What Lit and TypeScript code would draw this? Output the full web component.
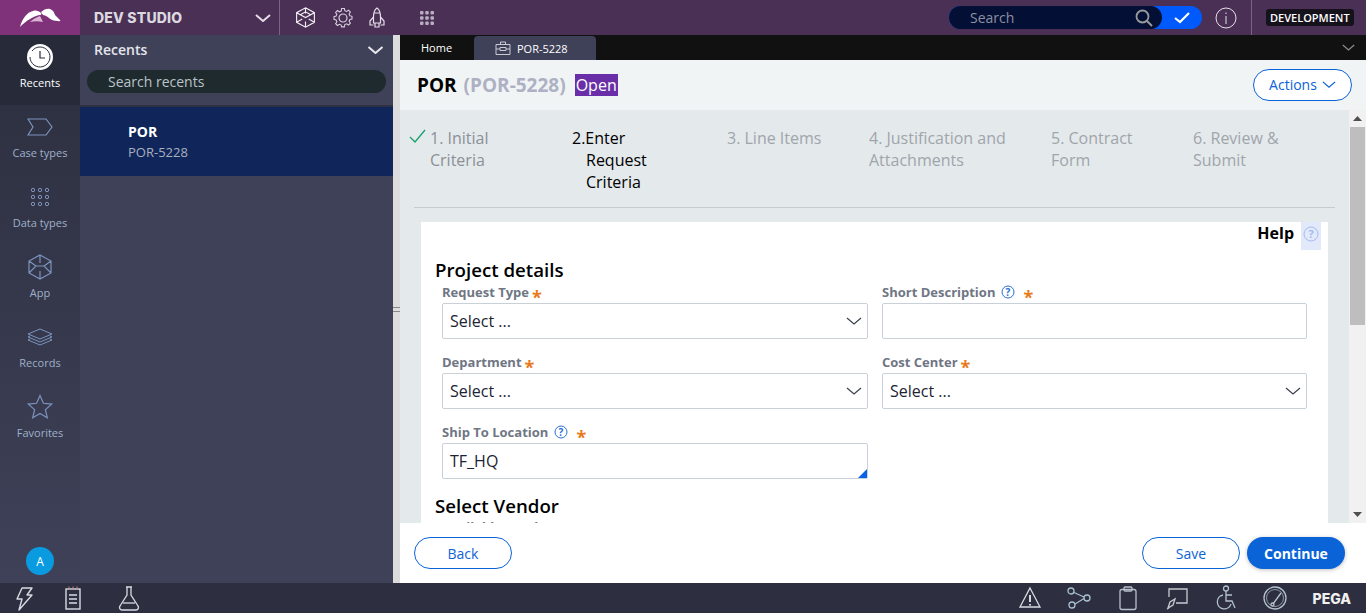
import {LitElement, css, html, svg} from 'lit';
import {customElement} from 'lit/decorators.js';

const railItems = [
    {
        label: 'Recents',
        active: true,
        icon: svg`<circle cx="13" cy="13" r="13" fill="#fff"/><path d="M5 7a10 10 0 1 1-2 6" fill="none" stroke="#2a2e3d"/><path d="M13 7v7h5" fill="none" stroke="#2a2e3d" stroke-width="1.200"/>`,
    },
    {
        label: 'Case types',
        icon: svg`<path d="M1 5h18l6 8-6 8H1l5-8z" fill="none" stroke="#7d93bd" stroke-width="1.2"/>`,
    },
    {
        label: 'Data types',
        icon: svg`<g fill="none" stroke="#7d93bd" stroke-width="1"><circle cx="6" cy="6" r="1.7"/><circle cx="13" cy="6" r="1.7"/><circle cx="20" cy="6" r="1.7"/><circle cx="6" cy="13" r="1.7"/><circle cx="13" cy="13" r="1.7"/><circle cx="20" cy="13" r="1.7"/><circle cx="6" cy="20" r="1.7"/><circle cx="13" cy="20" r="1.7"/><circle cx="20" cy="20" r="1.7"/></g>`,
    },
    {
        label: 'App',
        icon: svg`<path d="M13 1l11 6v12l-11 6-11-6V7zM13 1v8M2 7l7 5M24 7l-7 5M9 12l-7 7M17 12l7 7M13 25v-8M9 12h8" fill="none" stroke="#7d93bd" stroke-width="1.2"/>`,
    },
    {
        label: 'Records',
        icon: svg`<g fill="none" stroke="#7d93bd" stroke-width="1"><path d="M13 5l12 5-12 5-12-5z"/><path d="M3 12l-2 1 12 5 12-5-2-1"/><path d="M3 15l-2 1 12 5 12-5-2-1"/></g>`,
    },
    {
        label: 'Favorites',
        icon: svg`<path d="M13 1.500l3.400 7.800 8.300.8-6.300 5.500 1.900 8.200L13 19.500l-7.300 4.300 1.900-8.200L1.300 10.100l8.300-.8z" fill="none" stroke="#7d93bd" stroke-width="1.2"/>`,
    },
];

const steps = [
    {text: '1. Initial Criteria', state: 'done'},
    {text: '2.Enter Request Criteria', state: 'current'},
    {text: '3. Line Items', state: ''},
    {text: '4. Justification and Attachments', state: ''},
    {text: '5. Contract Form', state: ''},
    {text: '6. Review & Submit', state: ''},
];

const fields = [
    {label: 'Request Type', type: 'select', value: 'Select ...'},
    {label: 'Short Description', type: 'text', value: '', help: true},
    {label: 'Department', type: 'select', value: 'Select ...'},
    {label: 'Cost Center', type: 'select', value: 'Select ...'},
    {label: 'Ship To Location', type: 'lookup', value: 'TF_HQ', help: true},
];

const bottomLeft = [
    svg`<path d="M10 3h10l-5 7h5L7 25l3-11H5z" fill="none" stroke="#d8dae2" stroke-width="1.4" stroke-linejoin="round"/>`,
    svg`<g fill="none" stroke="#d8dae2"><rect x="6" y="4" width="14" height="20" stroke-width="1.4"/><path d="M9 1.500v3M13 1.500v3M17 1.500v3" stroke="#c78a8a"/><path d="M9 10h8M9 14h8M9 18h8" stroke-width="1.400"/></g>`,
    svg`<g fill="none" stroke="#d8dae2" stroke-width="1.3"><path d="M10 2h6M11 2v8L4 21a2.500 2.500 0 0 0 2 4h14a2.500 2.500 0 0 0 2-4l-7-11V2"/><path d="M7 18h12"/></g>`,
];

const bottomRight = [
    svg`<g fill="none" stroke="#d8dae2" stroke-width="1.300"><path d="M13 3l10 19H3z"/><path d="M13 10v7M13 19v1.500" stroke-width="2"/></g>`,
    svg`<g fill="none" stroke="#a9c0d0" stroke-width="1.300"><circle cx="5" cy="6" r="3"/><circle cx="21" cy="13" r="3"/><circle cx="6" cy="20" r="3"/><path d="M8 7.500l10 4.500M18 13.500L9 19"/></g>`,
    svg`<g fill="none" stroke="#b8c0cc" stroke-width="1.300"><rect x="5" y="4.500" width="16" height="20" rx="2"/><rect x="9" y="2" width="8" height="4" rx="1"/></g>`,
    svg`<g fill="none" stroke="#c8ccd0" stroke-width="1.300"><path d="M5 12V4h18v14H12"/><path d="M4 23l2-6 5-3-2 6zM3 24l2-1"/></g>`,
    svg`<g fill="none" stroke="#b4c2cc" stroke-width="1.300"><circle cx="13" cy="3.500" r="2.500"/><path d="M13 6v10h6l3 7"/><path d="M13 10h6M10 10a7 7 0 1 0 8 9"/></g>`,
    svg`<g fill="none" stroke="#b4c2cc" stroke-width="1.300"><circle cx="13" cy="13" r="11"/><circle cx="13" cy="13" r="8.500" stroke-width=".7"/><path d="M11 19l8-11"/><circle cx="10.500" cy="19.500" r="1.500"/></g>`,
];

const chevron = (color: string, width = 16, height = 8, weight = 1.5) => html`
    <svg width=${width} height=${height} viewBox="0 0 16 8"><path d="M1 1l7 6 7-6" fill="none" stroke=${color} stroke-width=${weight}/></svg>
`;

const helpIcon = () => html`
    <svg class="help-icon" width="14" height="14" viewBox="0 0 14 14"><circle cx="7" cy="7" r="6" fill="none" stroke="#2b6fd6"/><text x="7" y="10.500" text-anchor="middle" font-size="10" font-weight="700" fill="#2b6fd6">?</text></svg>
`;

@customElement('app-root')
class AppRoot extends LitElement {

    render() {
        return html`
        <div class="app">
            <header class="top">
                <div class="logo">
                    <svg width="42" height="20" viewBox="0 0 42 20">
                        <path d="M1 19C3 11 8 4 14 3c3-1 6 0 8 2 1 1 0 2-1 2C14 8 7 13 1 19z" fill="#fff"/>
                        <path d="M11 14c3-3 7-5 10-6l3 6c-4-1-9-1-13 0z" fill="#d8b6d4"/>
                        <path d="M22 4c3-3 7-4 9-3 3 1 4 3 5 6l5 5c1 1 0 1.500-2 1-4 0-7-1-9-3-2-2-5-3-6-3z" fill="#fff"/>
                    </svg>
                </div>
                <div class="studio">
                    <span class="studio-name">DEV STUDIO</span>
                    ${chevron('#e4dde8', 16, 8, 2)}
                </div>
                <div class="tools">
                    <svg width="21" height="21" viewBox="0 0 26 26"><path d="M13 1l11 6v12l-11 6-11-6V7zM2 7l11 6 11-6M13 1v7M2 19l7-4M24 19l-7-4M13 25v-7M6 10l7-4 7 4" fill="none" stroke="#f2eef4" stroke-width="1.400"/></svg>
                    <svg class="gear" width="20" height="20" viewBox="0 0 20 20"><path d="M8.500 1h3l.5 2.500 2 .9 2.200-1.400 2 2.100-1.400 2.100.9 2 2.300.6v3l-2.300.5-.9 2 1.400 2.200-2 2-2.200-1.400-2 .9-.5 2.500h-3L8 19.500l-2-.9-2.200 1.400-2-2 1.400-2.200-.9-2L0 13.200v-3l2.300-.6.900-2L1.800 5.500l2-2.100L6 4.800l2-.9z" transform="translate(1 -.5) scale(.9)" fill="none" stroke="#d6cfe0" stroke-width="1.200"/><circle cx="10" cy="10" r="4" fill="none" stroke="#d6cfe0" stroke-width="1.200"/></svg>
                    <svg width="18" height="22" viewBox="0 0 18 22"><path d="M9 1c3 2 3.500 6 3.500 9v6h-7v-6C5.500 7 6 3 9 1zM5.500 10L2 14v4h3.500M12.500 10l3.500 4v4h-3.500M7 16v4h4v-4M6 6h6" fill="none" stroke="#e4dfea" stroke-width="1.200"/></svg>
                    <svg class="apps" width="16" height="16" viewBox="0 0 16 16"><g fill="#b9aec4">
                        <rect x="1" y="1" width="3.500" height="3.500" rx="1"/><rect x="6.250" y="1" width="3.500" height="3.500" rx="1"/><rect x="11.500" y="1" width="3.500" height="3.500" rx="1"/>
                        <rect x="1" y="6.250" width="3.500" height="3.500" rx="1"/><rect x="6.250" y="6.250" width="3.500" height="3.500" rx="1"/><rect x="11.500" y="6.250" width="3.500" height="3.500" rx="1"/>
                        <rect x="1" y="11.500" width="3.500" height="3.500" rx="1"/><rect x="6.250" y="11.500" width="3.500" height="3.500" rx="1"/><rect x="11.500" y="11.500" width="3.500" height="3.500" rx="1"/>
                    </g></svg>
                </div>
                <div class="global-search">
                    <div class="global-input">
                        <span>Search</span>
                        <svg width="18" height="18" viewBox="0 0 18 18"><circle cx="7.500" cy="7.500" r="6" fill="none" stroke="#9a9a9a" stroke-width="1.800"/><path d="M12 12l5 5" stroke="#9a9a9a" stroke-width="2"/></svg>
                    </div>
                    <svg class="search-check" width="16" height="12" viewBox="0 0 16 12"><path d="M1 6l5 4 9-9" fill="none" stroke="#fff" stroke-width="2.200"/></svg>
                </div>
                <svg class="info" width="22" height="22" viewBox="0 0 22 22"><circle cx="11" cy="11" r="10" fill="none" stroke="#e6e0ea" stroke-width="1"/><path d="M11 9v8M11 5.500v1.500" stroke="#e6e0ea" stroke-width="1"/></svg>
                <div class="env"><span>DEVELOPMENT</span></div>
            </header>

            <div class="middle">
                <nav class="rail">
                    ${railItems.map(item => html`
                        <div class="rail-item ${item.active ? 'active' : ''}">
                            <svg width="26" height="26" viewBox="0 0 26 26">${item.icon}</svg>
                            <span>${item.label}</span>
                        </div>
                    `)}
                    <div class="avatar">A</div>
                </nav>

                <aside class="panel">
                    <div class="panel-head">
                        <span>Recents</span>
                        ${chevron('#e8e8ee', 17, 8, 2)}
                    </div>
                    <div class="panel-search">Search recents</div>
                    <div class="recent-row">
                        <b>POR</b>
                        <span>POR-5228</span>
                    </div>
                </aside>

                <div class="splitter"><i></i></div>

                <main class="work">
                    <div class="tabs">
                        <span class="tab-home">Home</span>
                        <div class="tab-case">
                            <svg width="16" height="14" viewBox="0 0 16 14"><path d="M1 3.500h14v10H1zM5.500 3.500V1h5v2.500M1 8h4M11 8h4M5 6.500v3h6v-3z" fill="none" stroke="#c9cad4"/></svg>
                            <span>POR-5228</span>
                        </div>
                        <span class="tabs-more">${chevron('#8d8d8d', 13, 7)}</span>
                    </div>

                    <div class="case-head">
                        <span class="case-name">POR</span>
                        <span class="case-id">(POR-5228)</span>
                        <span class="case-status">Open</span>
                        <button class="outline actions-btn">Actions ${chevron('#0b63d8', 14, 7)}</button>
                    </div>

                    <div class="body">
                        <div class="scroll">
                            <ol class="steps">
                                ${steps.map(step => html`
                                    <li class="step ${step.state}">
                                        ${step.state === 'done' ? html`<svg class="check" width="17" height="14" viewBox="0 0 17 14"><path d="M1 8l5 5L16 1" fill="none" stroke="#16a06c" stroke-width="1.300"/></svg>` : ''}
                                        ${step.text}
                                    </li>
                                `)}
                            </ol>

                            <section class="card">
                                <div class="help-row">
                                    <b>Help</b>
                                    <span class="help-box">
                                        <svg width="16" height="16" viewBox="0 0 16 16"><circle cx="8" cy="8" r="7" fill="none" stroke="#a4bcf0"/><text x="8" y="12" text-anchor="middle" font-size="11" font-weight="700" fill="#a4bcf0">?</text></svg>
                                    </span>
                                </div>
                                <h2>Project details</h2>
                                <div class="form">
                                    ${fields.map(field => html`
                                        <div class="field">
                                            <label class=${field.help ? 'has-help' : ''}>
                                                ${field.label}
                                                ${field.help ? helpIcon() : ''}
                                                <em>*</em>
                                            </label>
                                            <div class="control">
                                                <span>${field.value}</span>
                                                ${field.type === 'select' ? chevron('#3a3f4c', 16, 8, 1.2) : ''}
                                                ${field.type === 'lookup' ? html`<i class="corner"></i>` : ''}
                                            </div>
                                        </div>
                                    `)}
                                </div>
                                <h2 class="vendor">Select Vendor</h2>
                                <div class="vendor-note">Available Vendors</div>
                            </section>
                        </div>

                        <div class="scrollbar">
                            <svg width="9" height="5" viewBox="0 0 9 5"><path d="M4.500 0L9 5H0z" fill="#505050"/></svg>
                            <div class="thumb-track"><div class="thumb"></div></div>
                            <svg width="9" height="5" viewBox="0 0 9 5"><path d="M0 0h9L4.500 5z" fill="#505050"/></svg>
                        </div>
                    </div>

                    <footer class="actions">
                        <button class="outline wide">Back</button>
                        <span class="spacer"></span>
                        <button class="outline wide">Save</button>
                        <button class="primary">Continue</button>
                    </footer>
                </main>
            </div>

            <footer class="bottom">
                <div class="bottom-left">
                    ${bottomLeft.map(icon => html`<svg width="26" height="26" viewBox="0 0 26 26">${icon}</svg>`)}
                </div>
                <div class="bottom-right">
                    ${bottomRight.map(icon => html`<svg width="26" height="26" viewBox="0 0 26 26">${icon}</svg>`)}
                    <b>PEGA</b>
                </div>
            </footer>
        </div>
        `;
    }

    static styles = css`
        :host {
            display: block;
            height: 100vh;
            font-family: "Open Sans", "Liberation Sans", sans-serif;
        }

        .app {
            display: grid;
            grid-template-rows: 35px 1fr 30px;
            grid-template-columns: minmax(0, 1fr);
            height: 100%;
            overflow: hidden;
        }

        .top {
            display: flex;
            align-items: center;
            background: #4a3054;
        }

        .logo {
            display: flex;
            align-items: center;
            justify-content: center;
            box-sizing: border-box;
            width: 80px;
            height: 100%;
            padding-top: 1px;
            background: #7f3179;
        }

        .studio {
            display: flex;
            align-items: center;
            justify-content: space-between;
            box-sizing: border-box;
            width: 200px;
            height: 100%;
            padding: 0 8px 0 14px;
            border-right: 1px solid #7a6384;
        }

        .studio-name {
            font-family: Inter, "Open Sans", sans-serif;
            font-size: 14px;
            font-weight: 800;
            letter-spacing: 0.2px;
            color: #dcd8e0;
        }

        .tools {
            display: flex;
            align-items: center;
            gap: 15px;
            padding-left: 15px;
            width: 650px;
            box-sizing: border-box;
        }

        .gear {
            margin-left: 2px;
        }

        .apps {
            margin-left: 18px;
        }

        .global-search {
            display: flex;
            align-items: center;
            width: 253px;
            height: 23px;
            margin-left: 19px;
            border-radius: 12px;
            background: #0059fa;
        }

        .global-input {
            display: flex;
            align-items: center;
            justify-content: space-between;
            box-sizing: border-box;
            width: 213px;
            height: 100%;
            padding: 0 9px 0 21px;
            border-radius: 12px;
            background: #040f36;
            font-size: 14px;
            color: #8b91a0;
        }

        .search-check {
            margin-left: 12px;
        }

        .info {
            margin-left: 13px;
        }

        .env {
            display: flex;
            align-items: center;
            height: 100%;
            margin-left: 14px;
            padding-left: 14px;
            border-left: 1px solid #7a6384;
        }

        .env span {
            padding: 0 4px;
            height: 17px;
            line-height: 17px;
            border-radius: 3px;
            background: #16121c;
            font-size: 11px;
            font-weight: 600;
            color: #fff;
        }

        .middle {
            display: grid;
            grid-template-columns: 80px 313px 7px minmax(0, 1fr);
            min-height: 0;
        }

        .rail {
            display: flex;
            flex-direction: column;
            background: linear-gradient(#2c2f3e, #3f4159);
        }

        .rail-item {
            display: flex;
            flex-direction: column;
            align-items: center;
            box-sizing: border-box;
            height: 70px;
            padding-top: 9px;
            font-size: 11px;
            line-height: 16px;
            color: #9fb0c8;
        }

        .rail-item span {
            margin-top: 5px;
        }

        .rail-item.active {
            background: #272b39;
            color: #fff;
        }

        .avatar {
            display: flex;
            align-items: center;
            justify-content: center;
            width: 28px;
            height: 28px;
            margin: auto auto 8px;
            border-radius: 50%;
            background: #0a9ae0;
            font-size: 12px;
            color: #fff;
        }

        .panel {
            background: #3f4159;
            color: #fff;
        }

        .panel-head {
            display: flex;
            align-items: center;
            justify-content: space-between;
            height: 29px;
            padding: 0 9px 0 14px;
            font-size: 14px;
            font-weight: 600;
            color: #e4e6ec;
        }

        .panel-search {
            box-sizing: border-box;
            height: 23px;
            margin: 6px 7px 12px;
            padding-left: 21px;
            border-radius: 12px;
            background: #1f2a2e;
            font-size: 14px;
            line-height: 23px;
            color: #b9c4c9;
        }

        .recent-row {
            display: flex;
            flex-direction: column;
            justify-content: center;
            gap: 2px;
            box-sizing: border-box;
            height: 71px;
            padding: 1px 0 0 48px;
            border-top: 2px solid #2f3142;
            background: #10265a;
            font-size: 13px;
            line-height: 18px;
        }

        .recent-row b {
            font-size: 14px;
        }

        .recent-row span {
            color: #a8afbe;
        }

        .splitter {
            display: flex;
            align-items: center;
            justify-content: center;
            background: #dcdcdc;
        }

        .splitter i {
            width: 7px;
            height: 5px;
            border-top: 1px solid #888;
            border-bottom: 1px solid #888;
            box-sizing: border-box;
        }

        .work {
            display: flex;
            flex-direction: column;
            min-height: 0;
            min-width: 0;
            background: #fff;
        }

        .tabs {
            display: flex;
            align-items: flex-end;
            flex: none;
            height: 25px;
            background: #111;
            color: #fff;
            font-size: 11px;
        }

        .tab-home {
            align-self: center;
            width: 74px;
            text-align: left;
            padding-left: 21px;
            box-sizing: border-box;
        }

        .tab-case {
            display: flex;
            align-items: center;
            gap: 6px;
            box-sizing: border-box;
            width: 122px;
            height: 24px;
            padding-left: 21px;
            border-radius: 4px 4px 0 0;
            background: #3f4159;
        }

        .tabs-more {
            align-self: center;
            display: flex;
            margin-left: auto;
            padding-right: 11px;
        }

        .case-head {
            display: flex;
            align-items: center;
            flex: none;
            height: 50px;
            padding: 0 14px 0 17px;
            background: #f0f4f5;
            font-size: 19px;
            font-weight: 700;
        }

        .case-name {
            color: #000;
        }

        .case-id {
            margin-left: 7px;
            color: #aeb0c3;
        }

        .case-status {
            margin-left: 9px;
            padding: 0 1px;
            height: 22px;
            line-height: 22px;
            background: #6a2fa8;
            font-size: 16px;
            font-weight: 400;
            color: #fff;
        }

        button {
            font-family: inherit;
            font-size: 14px;
            cursor: pointer;
        }

        .outline {
            border: 1px solid #0b63d8;
            border-radius: 16px;
            background: #fff;
            color: #0b63d8;
        }

        .actions-btn {
            display: flex;
            align-items: center;
            justify-content: center;
            gap: 5px;
            width: 99px;
            height: 32px;
            margin: -1px 0 0 auto;
            padding: 0;
        }

        .body {
            display: flex;
            flex: 1;
            min-height: 0;
            background: #e4e9ec;
        }

        .scroll {
            flex: 1;
            min-width: 0;
            overflow: hidden;
            padding: 0 14px;
        }

        .steps {
            display: grid;
            grid-template-columns: 142px 155px 142px 182px 142px 142px;
            box-sizing: border-box;
            height: 98px;
            margin: 0;
            padding: 17px 0 0 16px;
            list-style: none;
            border-bottom: 1px solid #c6ccd0;
            font-size: 16px;
            line-height: 22px;
            color: #a0a5ab;
        }

        .step {
            position: relative;
            padding-right: 30px;
        }

        .step.done {
            color: #8b9097;
        }

        .step.current {
            padding-left: 14px;
            text-indent: -14px;
            padding-right: 70px;
            color: #000;
        }

        .check {
            position: absolute;
            left: -21px;
            top: 2px;
        }

        .card {
            box-sizing: border-box;
            width: 907px;
            min-height: 320px;
            margin: 14px 0 0 7px;
            padding: 0 7px 0 14px;
            background: #fff;
        }

        .help-row {
            display: flex;
            justify-content: flex-end;
            gap: 7px;
            height: 28px;
            font-size: 16px;
            line-height: 22px;
            color: #000;
        }

        .help-box {
            display: flex;
            justify-content: center;
            align-items: flex-start;
            padding-top: 4px;
            box-sizing: border-box;
            width: 20px;
            height: 28px;
            background: #e1e9fb;
        }

        h2 {
            margin: 8px 0 0;
            font-size: 18.7px;
            font-weight: 600;
            line-height: 24px;
            color: #000;
        }

        .form {
            display: grid;
            grid-template-columns: 426px 425px;
            column-gap: 14px;
            row-gap: 13px;
            margin: 0 0 0 7px;
        }

        .field label {
            display: flex;
            align-items: center;
            gap: 3px;
            box-sizing: border-box;
            height: 21px;
            padding-bottom: 2px;
            font-size: 13px;
            font-weight: 700;
            color: #6f7684;
        }

        .field label.has-help {
            gap: 6px;
        }

        .field em {
            height: 19px;
            font-style: normal;
            font-size: 18px;
            line-height: 31px;
            color: #e87a1d;
        }

        .field label.has-help em {
            margin-left: 2px;
        }

        .control {
            position: relative;
            display: flex;
            align-items: center;
            justify-content: space-between;
            box-sizing: border-box;
            height: 36px;
            padding: 0 5px 0 7px;
            border: 1px solid #c8d0d8;
            border-radius: 2px;
            font-size: 16px;
            color: #1c2433;
        }

        .corner {
            position: absolute;
            right: 0;
            bottom: 0;
            border-style: solid;
            border-width: 0 0 9px 9px;
            border-color: transparent transparent #0a63e6 transparent;
        }

        h2.vendor {
            margin-top: 15px;
        }

        .vendor-note {
            margin: 0 0 0 7px;
            padding-top: 0;
            font-size: 13px;
            font-weight: 700;
            line-height: 19px;
            color: #6f7684;
        }

        .scrollbar {
            display: flex;
            flex-direction: column;
            align-items: center;
            flex: none;
            justify-content: space-between;
            box-sizing: border-box;
            width: 17px;
            padding: 6px 0;
            background: #f1f1f1;
        }

        .thumb-track {
            flex: 1;
            width: 100%;
            padding: 6px 1px 0;
            box-sizing: border-box;
        }

        .thumb {
            width: 100%;
            height: 198px;
            background: #bebebe;
        }

        .actions {
            display: flex;
            align-items: center;
            flex: none;
            gap: 7px;
            height: 60px;
            padding: 0 21px 0 14px;
            background: #fff;
        }

        .spacer {
            flex: 1;
        }

        .wide {
            width: 98px;
            height: 32px;
        }

        .primary {
            width: 98px;
            height: 32px;
            border: 0;
            border-radius: 16px;
            background: #0b63d8;
            box-shadow: 0 1px 4px rgba(0, 0, 0, 0.25);
            font-weight: 700;
            color: #fff;
        }

        .bottom {
            display: flex;
            align-items: center;
            justify-content: space-between;
            background: #2d2f40;
        }

        .bottom-left, .bottom-right {
            display: flex;
            align-items: center;
        }

        .bottom-left {
            gap: 22px;
            padding-left: 12px;
        }

        .bottom-left svg:last-child {
            margin-left: 8px;
        }

        .bottom-right {
            gap: 23px;
            padding-right: 15px;
        }

        .bottom-right b {
            margin-left: 2px;
            font-family: Inter, "Open Sans", sans-serif;
            font-size: 14px;
            font-weight: 800;
            color: #f0f0f0;
        }
    `;
}
